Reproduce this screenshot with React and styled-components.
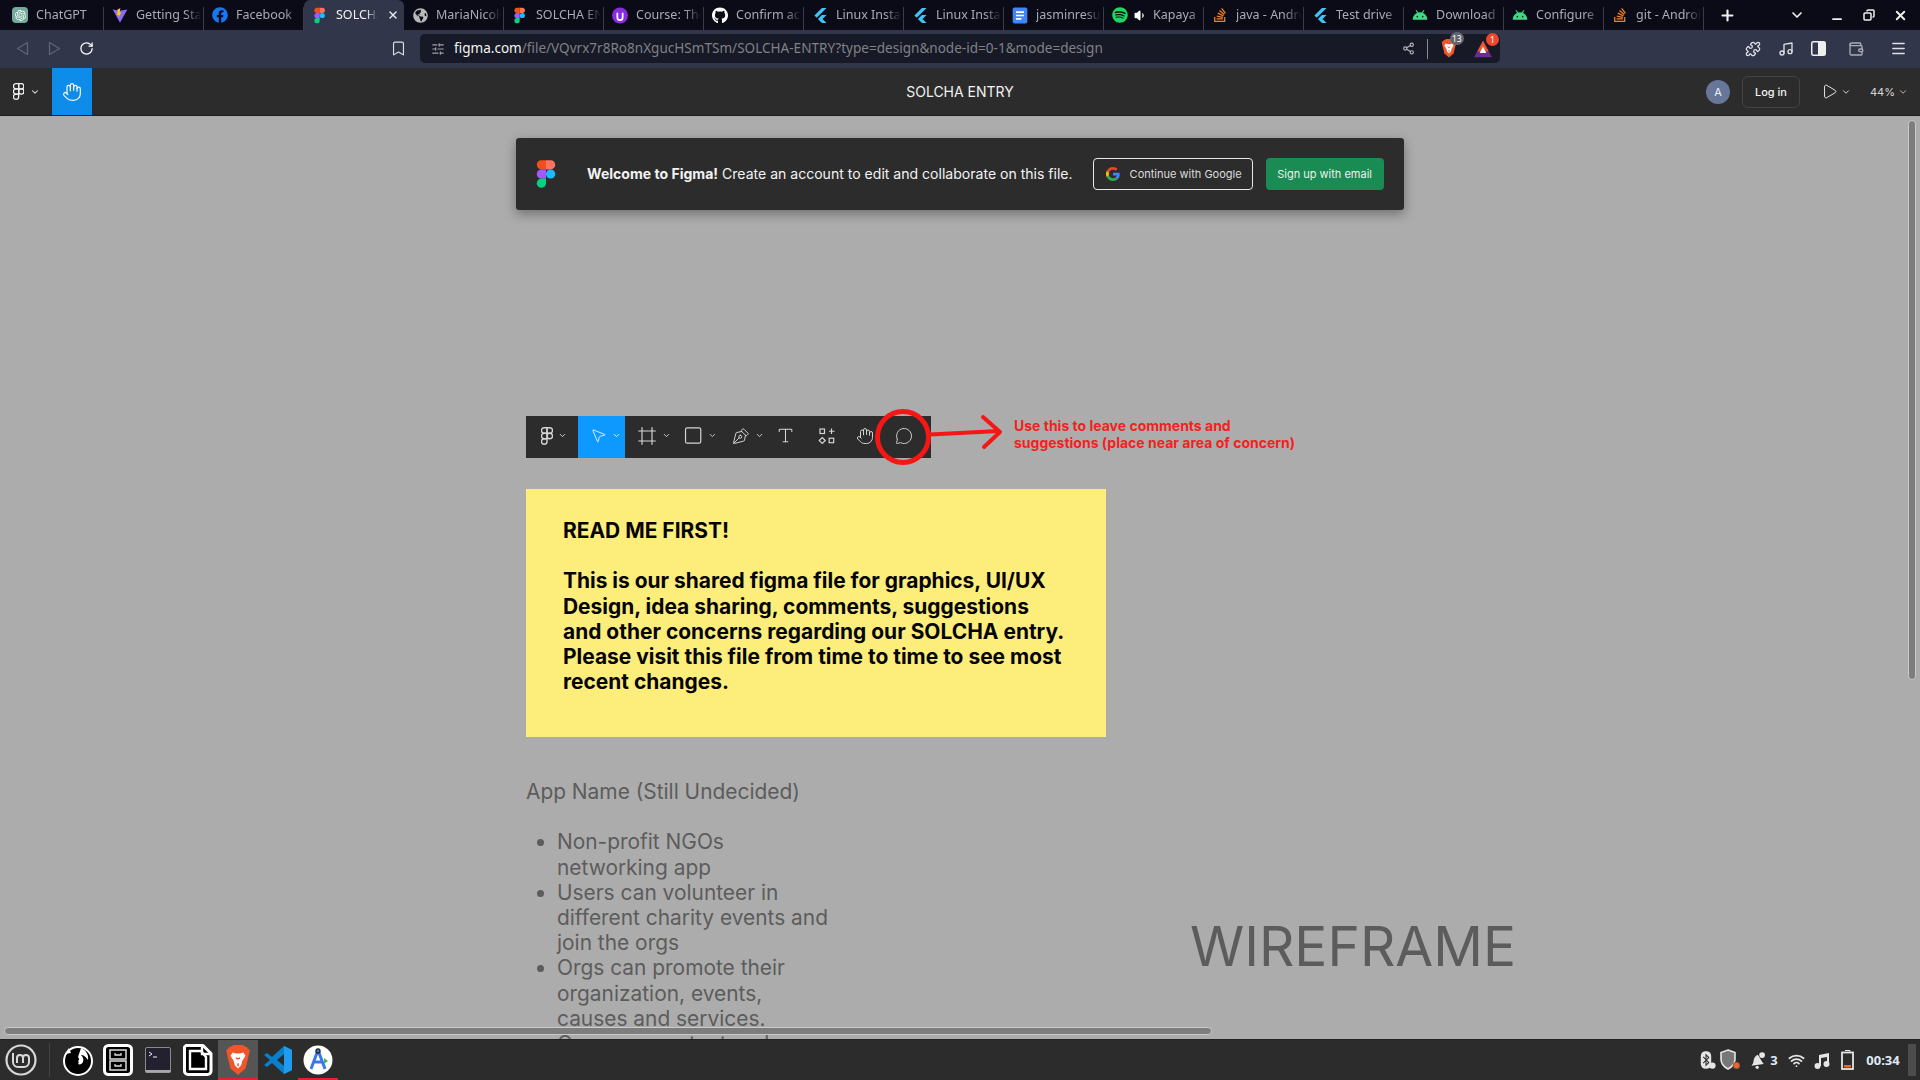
import React from 'react';
import styled, { createGlobalStyle } from 'styled-components';
import {
  ChevronDown, Hand, Plus, X, Minus, Share2, Music, Puzzle, Menu, Wallet, RotateCw, Bookmark, Play,
  SlidersHorizontal, MessageCircle, Square, Type, Frame, PenTool, MousePointer2, Copy, Wifi, Volume1,
} from 'lucide-react';
import { FaGithub, FaFacebook, FaSpotify, FaStackOverflow, FaGlobeAmericas } from 'react-icons/fa';
import { SiOpenai, SiFlutter } from 'react-icons/si';

const GlobalStyle = createGlobalStyle`
  html, body { margin: 0; padding: 0; width: 1920px; height: 1080px; overflow: hidden; background: #acacac; }
  #root { width: 1920px; height: 1080px; }
  * { box-sizing: border-box; }
`;

/* ---------- drawn icons ---------- */

function FigmaLogo({ size = 20, mono }) {
  const parts = [
    ['M0 6a6 6 0 0 1 6-6h6v12H6a6 6 0 0 1-6-6z', '#f24e1e'],
    ['M12 0h6a6 6 0 0 1 0 12h-6z', '#ff7262'],
    ['M0 18a6 6 0 0 1 6-6h6v12H6a6 6 0 0 1-6-6z', '#a259ff'],
    ['M12 18a6 6 0 1 1 12 0a6 6 0 0 1-12 0z', '#1abcfe'],
    ['M0 30a6 6 0 0 1 6-6h6v6a6 6 0 0 1-12 0z', '#0acf83'],
  ];
  return (
    <svg width={size * 0.667} height={size} viewBox="-1 -1 26 38">
      {parts.map(([d, c]) => (
        <path key={c} d={d} fill={mono ? 'none' : c} stroke={mono ? mono : 'none'} strokeWidth={mono ? 3 : 0} />
      ))}
    </svg>
  );
}

const GoogleLogo = () => (
  <svg width="14" height="14" viewBox="0 0 48 48">
    <path fill="#ea4335" d="M24 9.500c3.500 0 6.700 1.300 9.100 3.500l6.800-6.800C35.800 2.400 30.200 0 24 0 14.600 0 6.500 5.400 2.600 13.200l7.900 6.100C12.400 13.600 17.700 9.500 24 9.500z" />
    <path fill="#4285f4" d="M47 24.500c0-1.600-.1-3.200-.4-4.700H24v9h13c-.6 3-2.200 5.500-4.800 7.200l7.700 6c4.500-4.200 7.100-10.300 7.100-17.500z" />
    <path fill="#fbbc05" d="M10.500 28.700A14.500 14.500 0 0 1 9.700 24c0-1.600.3-3.200.8-4.700l-7.900-6.100A24 24 0 0 0 0 24c0 3.900.9 7.500 2.600 10.800l7.900-6.100z" />
    <path fill="#34a853" d="M24 48c6.500 0 11.900-2.100 15.900-5.800l-7.700-6c-2.100 1.400-4.900 2.300-8.200 2.300-6.300 0-11.600-4.100-13.500-9.800l-7.900 6.100C6.500 42.600 14.600 48 24 48z" />
  </svg>
);

const ViteLogo = () => (
  <svg width="17" height="17" viewBox="0 0 24 24">
    <path d="M1 3l11 20L23 3 12 5z" fill="#8b6cf5" />
    <path d="M12.500 1l-4 1.500-1 9 2.500-.5-.5 4 4.500-8-2.500.5z" fill="#ffc820" />
  </svg>
);

const CourseLogo = () => (
  <svg width="17" height="17" viewBox="0 0 24 24">
    <circle cx="12" cy="12" r="12" fill="#8a2be2" />
    <path d="M8 8v7a4 4 0 0 0 8 0V8" fill="none" stroke="#fff" strokeWidth="2.600" />
  </svg>
);

const DocsLogo = () => (
  <svg width="16" height="17" viewBox="0 0 24 24">
    <rect x="1" width="22" height="24" rx="3" fill="#4285f4" />
    <path d="M6 7h12M6 12h12M6 17h8" stroke="#fff" strokeWidth="2.400" />
  </svg>
);

const AndroidHead = () => (
  <svg width="17" height="14" viewBox="0 0 24 16">
    <path d="M1 15a11 11 0 0 1 22 0z" fill="#3ddc84" />
    <path d="M6 1l3 4M18 1l-3 4" stroke="#3ddc84" strokeWidth="1.600" />
    <circle cx="8" cy="10.500" r="1.200" fill="#0b0b17" />
    <circle cx="16" cy="10.500" r="1.200" fill="#0b0b17" />
  </svg>
);

const NavTriangle = ({ flip }) => (
  <svg width="13" height="15" viewBox="0 0 13 15" fill="none" stroke="#5f6376" strokeWidth="1.300" strokeLinejoin="round">
    <path d={flip ? 'M1.500 1.500L11.500 7.500L1.500 13.500z' : 'M11.500 1.500L1.500 7.500L11.500 13.500z'} />
  </svg>
);

const SidebarIcon = () => (
  <svg width="15" height="15" viewBox="0 0 15 15">
    <rect x="0.750" y="0.750" width="13.500" height="13.500" rx="1.500" fill="none" stroke="#eee" strokeWidth="1.500" />
    <rect x="7" y="1" width="7" height="13" fill="#eee" />
  </svg>
);

const BraveShield = ({ size = 18 }) => (
  <svg width={size} height={size * 1.15} viewBox="0 0 24 28">
    <path d="M4 2l4-2h8l4 2 3 3-1 5-3 12-7 6-7-6L2 10 1 5z" fill="#f1562b" />
    <path d="M7 7l3 1h4l3-1 2 3-3 5-1 4-3 3-3-3-1-4-3-5z" fill="#fff" />
    <path d="M10 12l2 1 2-1M12 17v3" stroke="#f1562b" strokeWidth="1.400" fill="none" />
  </svg>
);

const RewardsTriangle = () => (
  <svg width="20" height="18" viewBox="0 0 24 22">
    <path d="M12 1l11 20H1z" fill="#6a2c91" />
    <path d="M12 1l7 13H5z" fill="#f1562b" />
    <path d="M12 8l4 8H8z" fill="#fff" />
  </svg>
);

const MintLogo = () => (
  <svg width="32" height="32" viewBox="0 0 32 32" fill="none" stroke="#d8d8d8">
    <circle cx="16" cy="16" r="14.500" strokeWidth="2.200" />
    <path d="M8 9v9a5 5 0 0 0 5 5h6a5 5 0 0 0 5-5v-4a3 3 0 0 0-6 0v5M18 14a3 3 0 0 0-6 0v5" strokeWidth="2" />
  </svg>
);

const FirefoxMono = () => (
  <svg width="32" height="32" viewBox="0 0 32 32">
    <circle cx="16" cy="17" r="14" fill="#000" stroke="#fff" strokeWidth="2" />
    <path d="M19 4c5 2 8 7 7 12-2-3-4-5-7-5 2 2 3 4 2 7-1 2-3 3-5 2 1-1 1-2 0-3 2-1 1-3 0-4 1-3 2-6 3-9z" fill="#fff" />
    <path d="M3 10l4-6 2 5z" fill="#fff" />
  </svg>
);

const CabinetIcon = () => (
  <svg width="30" height="32" viewBox="0 0 30 32">
    <rect x="1.500" y="1.500" width="27" height="29" rx="4" fill="#000" stroke="#fff" strokeWidth="3" />
    <rect x="7" y="6" width="16" height="9" fill="none" stroke="#ddd" strokeWidth="1.500" />
    <rect x="7" y="17" width="16" height="9" fill="none" stroke="#ddd" strokeWidth="1.500" />
    <path d="M12 9v2h6V9M12 20v2h6v-2" fill="none" stroke="#ddd" strokeWidth="1.300" />
  </svg>
);

const TerminalIcon = () => (
  <svg width="26" height="26" viewBox="0 0 26 26">
    <rect x="0.500" y="0.500" width="25" height="25" rx="1.500" fill="#23212f" stroke="#8a8a8a" />
    <rect x="0.500" y="23" width="25" height="2.500" fill="#a8a8a8" />
    <path d="M4 5l3 2-3 2" fill="none" stroke="#eee" strokeWidth="1" />
    <path d="M8 10h4" stroke="#eee" strokeWidth="1" />
  </svg>
);

const OfficeIcon = () => (
  <svg width="30" height="32" viewBox="0 0 30 32">
    <path d="M3 1.500h17l8 8V27a3.500 3.500 0 0 1-3.500 3.500H5A3.500 3.500 0 0 1 1.500 27V3z" fill="#000" stroke="#fff" strokeWidth="3" strokeLinejoin="round" />
    <path d="M7 7h11l5 6v12H7z" fill="none" stroke="#fff" strokeWidth="2.400" />
    <path d="M19 2v8h9" fill="none" stroke="#fff" strokeWidth="2.400" />
  </svg>
);

const VSCodeIcon = () => (
  <svg width="30" height="30" viewBox="0 0 30 30">
    <path d="M21 1l8 4v20l-8 4L9 18l-5 4-3-2 6-5-6-5 3-2 5 4z" fill="#0a7fcc" />
    <path d="M21 1l8 4v20l-8 4z" fill="#1f9cf0" />
    <path d="M21 9l-7 6 7 6z" fill="#2c2c2c" />
  </svg>
);

const StudioIcon = () => (
  <svg width="30" height="30" viewBox="0 0 30 30">
    <circle cx="15" cy="15" r="14.500" fill="#fff" />
    <path d="M15 5L8 24M15 5l7 19M10 17h10" stroke="#3b78e7" strokeWidth="3" fill="none" />
    <circle cx="15" cy="6" r="2" fill="none" stroke="#222" strokeWidth="1.300" />
    <path d="M21 13l4 3-4 3z" fill="#4caf50" />
  </svg>
);

const BluetoothBlob = () => (
  <svg width="16" height="20" viewBox="0 0 20 24">
    <rect x="1" y="1" width="13" height="22" rx="6" fill="#e6e6e6" />
    <path d="M4 8l7 7-3.500 3.500V5.500L11 9l-7 7" fill="none" stroke="#2c2c2c" strokeWidth="1.300" />
    <circle cx="15.500" cy="19" r="4" fill="#e6e6e6" />
  </svg>
);

const ShieldDot = () => (
  <svg width="22" height="22" viewBox="0 0 22 22">
    <path d="M8 1l7 2.500V10c0 5-3 8-7 10-4-2-7-5-7-10V3.500z" fill="#777" stroke="#e6e6e6" strokeWidth="1.600" />
    <circle cx="16.500" cy="16.500" r="3.500" fill="#e8672c" stroke="#2c2c2c" strokeWidth="0.500" />
  </svg>
);

const BellDot = () => (
  <svg width="18" height="18" viewBox="0 0 22 22">
    <path d="M11 5l5 8 2 3-15 2 2-3 1-5c1-3 3-5 5-5z" fill="#e6e6e6" />
    <circle cx="10" cy="20" r="2" fill="#e6e6e6" />
    <circle cx="16" cy="5" r="3.500" fill="#e6e6e6" />
  </svg>
);

const MusicSolid = () => (
  <svg width="16" height="17" viewBox="0 0 16 17">
    <path d="M5 3l10-2v11h-2V5l-6 1v8H5z" fill="#e6e6e6" />
    <circle cx="3.500" cy="14" r="3" fill="#e6e6e6" />
    <circle cx="12.500" cy="12" r="3" fill="#e6e6e6" />
  </svg>
);

const BatteryLow = () => (
  <svg width="13" height="20" viewBox="0 0 13 20">
    <path d="M4 0.500h5v2" fill="none" stroke="#e6e6e6" />
    <rect x="1" y="2.500" width="11" height="16.500" fill="none" stroke="#e6e6e6" strokeWidth="1.800" />
    <rect x="3" y="15" width="7" height="2.500" fill="#e8672c" />
  </svg>
);

const ComponentsIcon = () => (
  <svg width="18" height="18" viewBox="0 0 18 18" fill="none" stroke="#d4d4d4" strokeWidth="1.200">
    <rect x="2" y="2" width="4.500" height="4.500" />
    <path d="M13.500 1.500v5.500M11 4.250h5.500" />
    <path d="M4.250 10.500l3 3-3 3-3-3z" />
    <rect x="11.200" y="11.200" width="4.500" height="4.500" />
  </svg>
);

const SoundIcon = styled(Volume1)`
  flex: none;
  margin: 0 -2px;
`;

const RestoreIcon = styled(Copy)`
  transform: scaleX(-1);
`;

const MinimizeIcon = styled(Minus)`
  margin-top: 8px;
`;

const PenIcon = styled(PenTool)`
  transform: rotate(-90deg);
`;

/* ---------- browser tab strip ---------- */

const tabs = [
  { title: 'ChatGPT', icon: <SiOpenai size={11} color="#fff" />, chip: '#74aa9c' },
  { title: 'Getting Started', icon: <ViteLogo /> },
  { title: 'Facebook', icon: <FaFacebook size={16} color="#1877f2" /> },
  { title: 'SOLCHA', icon: <FigmaLogo size={17} />, active: true },
  { title: 'MariaNicole', icon: <FaGlobeAmericas size={15} color="#b9b9b9" /> },
  { title: 'SOLCHA ENTRY', icon: <FigmaLogo size={17} /> },
  { title: 'Course: The', icon: <CourseLogo /> },
  { title: 'Confirm access', icon: <FaGithub size={17} color="#fff" /> },
  { title: 'Linux Install', icon: <SiFlutter size={15} color="#3fc4f5" /> },
  { title: 'Linux Install', icon: <SiFlutter size={15} color="#3fc4f5" /> },
  { title: 'jasminresume', icon: <DocsLogo /> },
  { title: 'Kapaya', icon: <FaSpotify size={16} color="#1ed760" />, sound: true },
  { title: 'java - Android', icon: <FaStackOverflow size={16} color="#f48024" /> },
  { title: 'Test drive', icon: <SiFlutter size={15} color="#3fc4f5" /> },
  { title: 'Download', icon: <AndroidHead /> },
  { title: 'Configure', icon: <AndroidHead /> },
  { title: 'git - Android', icon: <FaStackOverflow size={16} color="#f48024" /> },
];

const Page = styled.div`
  width: 1920px;
  height: 1080px;
  display: flex;
  flex-direction: column;
  overflow: hidden;
`;

const TabStrip = styled.div`
  height: 30px;
  flex: none;
  display: flex;
  align-items: stretch;
  padding-left: 4px;
  background: #0b0b17;
  font-family: 'Noto Sans', sans-serif;
`;

const Tab = styled.div`
  width: 100px;
  flex: none;
  display: flex;
  align-items: center;
  gap: 8px;
  padding-left: 8px;
  position: relative;
  border-radius: 6px 6px 0 0;
  background: ${(p) => (p.$active ? '#31364a' : 'transparent')};
  &::after {
    content: '';
    position: absolute;
    right: 0;
    top: 7px;
    bottom: 0;
    width: 1px;
    background: ${(p) => (p.$active ? 'transparent' : '#3a3c4c')};
  }
`;

const TabIcon = styled.span`
  width: 16px;
  height: 16px;
  flex: none;
  display: flex;
  align-items: center;
  justify-content: center;
  border-radius: 4px;
  background: ${(p) => p.$chip || 'transparent'};
`;

const TabTitle = styled.span`
  flex: 1;
  min-width: 0;
  overflow: hidden;
  white-space: nowrap;
  font-size: 12.500px;
  line-height: 30px;
  color: ${(p) => (p.$active ? '#f2f2f2' : '#a9abb4')};
  mask-image: linear-gradient(to right, #000 72%, transparent 96%);
`;

const TabClose = styled.span`
  flex: none;
  display: flex;
  margin-right: 5px;
  color: #e8e8e8;
`;

const StripButton = styled.span`
  flex: none;
  width: ${(p) => p.$w}px;
  margin-left: ${(p) => p.$gap || 0}px;
  display: flex;
  align-items: center;
  justify-content: center;
  color: #f0f0f0;
`;

/* ---------- address bar ---------- */

const AddressRow = styled.div`
  height: 38px;
  flex: none;
  display: flex;
  align-items: center;
  padding-bottom: 1px;
  background: #31364a;
  font-family: 'Noto Sans', sans-serif;
`;

const ToolButton = styled.span`
  width: ${(p) => p.$w}px;
  margin-left: ${(p) => p.$gap || 0}px;
  flex: none;
  display: flex;
  align-items: center;
  justify-content: center;
  color: #dfe0e4;
`;

const UrlBox = styled.div`
  width: 1080px;
  height: 29px;
  margin-left: 6px;
  flex: none;
  display: flex;
  align-items: center;
  padding: 0 0 0 11px;
  border-radius: 5px;
  background: #171a26;
`;

const UrlText = styled.div`
  margin-left: 9px;
  flex: 1;
  font-size: 13.550px;
  line-height: 27px;
  white-space: nowrap;
  color: #7f8187;
  b { font-weight: 400; color: #f2f2f2; }
`;

const UrlDivider = styled.span`
  width: 1px;
  height: 20px;
  margin: 0 4px 0 12px;
  background: #8a8c93;
`;

const ExtIcon = styled.span`
  position: relative;
  width: 34px;
  flex: none;
  display: flex;
  align-items: center;
  justify-content: center;
`;

const ExtBadge = styled.span`
  position: absolute;
  top: -7px;
  left: ${(p) => p.$left}px;
  min-width: 13px;
  height: 13px;
  padding: 0 2px;
  border-radius: 7px;
  font-size: 8.500px;
  line-height: 13px;
  text-align: center;
  color: #fff;
  background: ${(p) => p.$bg};
`;

/* ---------- figma header ---------- */

const FigmaBar = styled.div`
  height: 48px;
  flex: none;
  display: flex;
  align-items: stretch;
  background: #2c2c2c;
  border-bottom: 1px solid #1f1f1f;
  position: relative;
  font-family: Inter, sans-serif;
  color: #f2f2f2;
`;

const MenuButton = styled.div`
  width: 52px;
  display: flex;
  align-items: center;
  gap: 6px;
  padding-left: 13px;
`;

const HandButton = styled.div`
  width: 40px;
  display: flex;
  align-items: center;
  justify-content: center;
  background: #0d8ce9;
`;

const FileTitle = styled.div`
  position: absolute;
  left: 0;
  right: 0;
  top: 0;
  bottom: 0;
  display: flex;
  align-items: center;
  justify-content: center;
  font-size: 14px;
  pointer-events: none;
`;

const BarRight = styled.div`
  margin-left: auto;
  display: flex;
  align-items: center;
`;

const Avatar = styled.div`
  width: 24px;
  height: 24px;
  margin-right: 12px;
  border-radius: 50%;
  display: flex;
  align-items: center;
  justify-content: center;
  font-size: 11px;
  background: #667799;
`;

const LoginButton = styled.div`
  width: 58px;
  height: 32px;
  display: flex;
  align-items: center;
  justify-content: center;
  border: 1px solid #444;
  border-radius: 6px;
  font-size: 11px;
  font-weight: 500;
`;

const PlayGroup = styled.div`
  width: 40px;
  margin-left: 21px;
  display: flex;
  align-items: center;
  gap: 3px;
`;

const ZoomGroup = styled.div`
  width: 50px;
  margin-left: 9px;
  display: flex;
  align-items: center;
  gap: 3px;
  font-size: 11px;
  color: #d8d8d8;
`;

/* ---------- canvas ---------- */

const Canvas = styled.div`
  flex: 1;
  position: relative;
  overflow: hidden;
  background: #acacac;
  font-family: Inter, sans-serif;
`;

const Banner = styled.div`
  position: absolute;
  left: 516px;
  top: 22px;
  width: 888px;
  height: 72px;
  display: flex;
  align-items: center;
  padding-left: 20px;
  border-radius: 3px;
  background: #2c2c2c;
  box-shadow: 0 4px 12px rgba(0, 0, 0, 0.35);
  color: #f2f2f2;
`;

const BannerText = styled.div`
  margin: 0 0 2px 31px;
  font-size: 14.050px;
  white-space: nowrap;
  b { font-weight: 700; }
`;

const GoogleButton = styled.div`
  width: 160px;
  height: 32px;
  margin-left: 20px;
  display: flex;
  align-items: center;
  gap: 10px;
  padding-left: 12px;
  border: 1px solid #e8e8e8;
  border-radius: 4px;
  font-size: 11px;
  color: #dcdcdc;
`;

const SignupButton = styled.div`
  width: 118px;
  height: 32px;
  margin-left: 13px;
  display: flex;
  align-items: center;
  justify-content: center;
  border-radius: 4px;
  font-size: 11px;
  color: #e8f3ec;
  background: #1a8b53;
`;

const ToolStrip = styled.div`
  position: absolute;
  left: 526px;
  top: 300px;
  width: 405px;
  height: 42px;
  display: flex;
  background: #2c2c2c;
`;

const ToolSlot = styled.div`
  width: ${(p) => p.$w}px;
  flex: none;
  display: flex;
  align-items: center;
  justify-content: center;
  gap: 5px;
  padding: 0 ${(p) => p.$padRight || 0}px 3px ${(p) => p.$pad || 0}px;
  color: #d4d4d4;
  background: ${(p) => (p.$active ? '#0d99ff' : 'transparent')};
`;

const RedRing = styled.div`
  position: absolute;
  left: 875px;
  top: 293px;
  width: 56px;
  height: 56px;
  border: 5px solid #f51616;
  border-radius: 50%;
`;

const RedArrow = styled.svg`
  position: absolute;
  left: 928px;
  top: 298px;
`;

const RedNote = styled.div`
  position: absolute;
  left: 1014px;
  top: 302px;
  font-size: 14px;
  line-height: 16.500px;
  font-weight: 700;
  white-space: nowrap;
  color: #f51f1f;
`;

const Sticky = styled.div`
  position: absolute;
  left: 526px;
  top: 373px;
  width: 580px;
  height: 248px;
  padding: 29px 30px 0 37px;
  background: #fdee7c;
  font-size: 20.950px;
  line-height: 25.200px;
  font-weight: 700;
  color: #050505;
  p { margin: 0 0 25.200px; white-space: nowrap; }
`;

const Notes = styled.div`
  position: absolute;
  left: 526px;
  top: 663px;
  width: 340px;
  font-size: 20.900px;
  line-height: 25.200px;
  color: #5c5c5c;
  p { margin: 0 0 25.200px; }
  ul { margin: 0; padding: 0 0 0 31px; width: 310px; }
`;

const Wireframe = styled.div`
  position: absolute;
  left: 1190px;
  top: 796px;
  font-size: 55px;
  line-height: 68px;
  color: #5c5c5c;
`;

const HScroll = styled.div`
  position: absolute;
  left: 4px;
  top: 911px;
  width: 1208px;
  height: 8px;
  border: 1px solid #c9c9c9;
  border-radius: 4px;
  background: #7d7d7d;
`;

const VScroll = styled.div`
  position: absolute;
  left: 1908px;
  top: 4px;
  width: 8px;
  height: 560px;
  border: 1px solid #c9c9c9;
  border-radius: 4px;
  background: #7d7d7d;
`;

/* ---------- taskbar ---------- */

const Taskbar = styled.div`
  height: 41px;
  flex: none;
  display: flex;
  align-items: stretch;
  background: #2c2c2c;
  border-top: 1px solid #222;
  font-family: 'Noto Sans', sans-serif;
`;

const StartCell = styled.div`
  width: 50px;
  flex: none;
  display: flex;
  align-items: center;
  justify-content: center;
  padding-right: 8px;
  margin-right: 8px;
  position: relative;
  &::after {
    content: '';
    position: absolute;
    right: 0;
    top: 3px;
    bottom: 3px;
    width: 1px;
    background: #444;
  }
`;

const AppCell = styled.div`
  width: 40px;
  flex: none;
  display: flex;
  align-items: center;
  justify-content: center;
  background: ${(p) => (p.$focused ? '#555' : 'transparent')};
  border-bottom: 2px solid ${(p) => (p.$running ? '#e0222c' : 'transparent')};
  border-top: 2px solid transparent;
`;

const Tray = styled.div`
  margin-left: auto;
  display: flex;
  align-items: center;
`;

const TrayItem = styled.span`
  width: ${(p) => p.$w}px;
  flex: none;
  display: flex;
  align-items: center;
  justify-content: center;
  color: #e6e6e6;
`;

const TrayText = styled.span`
  font-size: 13px;
  font-weight: 700;
  color: #dfe9f5;
  white-space: nowrap;
`;

const ShowDesktop = styled.div`
  width: 8px;
  height: 32px;
  margin: 0 4px 0 7px;
  background: #4c4c4c;
`;

export default function App() {
  return (
    <Page>
      <GlobalStyle />
      <TabStrip>
        {tabs.map((t, i) => (
          <Tab key={i} $active={t.active}>
            <TabIcon $chip={t.chip}>{t.icon}</TabIcon>
            {t.sound && <SoundIcon size={13} color="#fff" fill="#fff" />}
            <TabTitle $active={t.active}>{t.title}</TabTitle>
            {t.active && <TabClose><X size={12} strokeWidth={3} /></TabClose>}
          </Tab>
        ))}
        <StripButton $w={46}><Plus size={17} strokeWidth={3} /></StripButton>
        <StripButton $w={40} $gap={27}><ChevronDown size={16} strokeWidth={2.5} /></StripButton>
        <StripButton $w={40}><MinimizeIcon size={14} strokeWidth={3} /></StripButton>
        <StripButton $w={23}><RestoreIcon size={12} strokeWidth={3} /></StripButton>
        <StripButton $w={40}><X size={15} strokeWidth={3} /></StripButton>
      </TabStrip>

      <AddressRow>
        <ToolButton $w={44}><NavTriangle /></ToolButton>
        <ToolButton $w={20}><NavTriangle flip /></ToolButton>
        <ToolButton $w={44}><RotateCw size={15} strokeWidth={2} color="#fff" /></ToolButton>
        <ToolButton $w={32} $gap={274}><Bookmark size={17} strokeWidth={1.6} /></ToolButton>
        <UrlBox>
          <SlidersHorizontal size={14} color="#a0a2a8" />
          <UrlText><b>figma.com</b>/file/VQvrx7r8Ro8nXgucHSmTSm/SOLCHA-ENTRY?type=design&amp;node-id=0-1&amp;mode=design</UrlText>
          <Share2 size={13} color="#b6b8bd" />
          <UrlDivider />
          <ExtIcon>
            <BraveShield size={16} />
            <ExtBadge $left={18} $bg="#62646e">13</ExtBadge>
          </ExtIcon>
          <ExtIcon>
            <RewardsTriangle />
            <ExtBadge $left={20} $bg="#f1462b">1</ExtBadge>
          </ExtIcon>
        </UrlBox>
        <ToolButton $w={34} $gap={236}><Puzzle size={16} /></ToolButton>
        <ToolButton $w={32}><Music size={16} /></ToolButton>
        <ToolButton $w={32}><SidebarIcon /></ToolButton>
        <ToolButton $w={44}><Wallet size={16} color="#aaacb4" /></ToolButton>
        <ToolButton $w={40}><Menu size={17} /></ToolButton>
      </AddressRow>

      <FigmaBar>
        <MenuButton>
          <FigmaLogo size={17} mono="#f0f0f0" />
          <ChevronDown size={10} strokeWidth={2.5} />
        </MenuButton>
        <HandButton><Hand size={20} strokeWidth={1.5} /></HandButton>
        <FileTitle>SOLCHA ENTRY</FileTitle>
        <BarRight>
          <Avatar>A</Avatar>
          <LoginButton>Log in</LoginButton>
          <PlayGroup>
            <Play size={17} strokeWidth={1.3} />
            <ChevronDown size={10} strokeWidth={2} />
          </PlayGroup>
          <ZoomGroup>
            <span>44%</span>
            <ChevronDown size={10} strokeWidth={2} />
          </ZoomGroup>
        </BarRight>
      </FigmaBar>

      <Canvas>
        <Banner>
          <FigmaLogo size={30} />
          <BannerText><b>Welcome to Figma!</b> Create an account to edit and collaborate on this file.</BannerText>
          <GoogleButton><GoogleLogo />Continue with Google</GoogleButton>
          <SignupButton>Sign up with email</SignupButton>
        </Banner>

        <ToolStrip>
          <ToolSlot $w={52} $pad={3}><FigmaLogo size={18} mono="#d4d4d4" /><ChevronDown size={9} strokeWidth={2.5} /></ToolSlot>
          <ToolSlot $w={47} $active $pad={8}><MousePointer2 size={17} strokeWidth={1.3} color="#e8f4ff" /><ChevronDown size={9} strokeWidth={2.5} color="#e8f4ff" /></ToolSlot>
          <ToolSlot $w={46} $pad={12}><Frame size={20} strokeWidth={1.4} /><ChevronDown size={9} strokeWidth={2.5} /></ToolSlot>
          <ToolSlot $w={46} $pad={12}><Square size={21} strokeWidth={1.4} /><ChevronDown size={9} strokeWidth={2.5} /></ToolSlot>
          <ToolSlot $w={47} $pad={14}><PenIcon size={18} strokeWidth={1.3} /><ChevronDown size={9} strokeWidth={2.5} /></ToolSlot>
          <ToolSlot $w={43}><Type size={19} strokeWidth={1.3} /></ToolSlot>
          <ToolSlot $w={39}><ComponentsIcon /></ToolSlot>
          <ToolSlot $w={38}><Hand size={18} strokeWidth={1.3} /></ToolSlot>
          <ToolSlot $w={47} $padRight={7}><MessageCircle size={18} strokeWidth={1.3} /></ToolSlot>
        </ToolStrip>
        <RedRing />
        <RedArrow width="76" height="36" viewBox="0 0 76 36" fill="none" stroke="#f51616" strokeWidth="4">
          <path d="M2 20.500L71 17" />
          <path d="M55 3l17 15-16 15" strokeLinecap="round" strokeLinejoin="round" />
        </RedArrow>
        <RedNote>Use this to leave comments and<br />suggestions (place near area of concern)</RedNote>

        <Sticky>
          <p>READ ME FIRST!</p>
          This is our shared figma file for graphics, UI/UX<br />
          Design, idea sharing, comments, suggestions<br />
          and other concerns regarding our SOLCHA entry.<br />
          Please visit this file from time to time to see most<br />
          recent changes.
        </Sticky>

        <Notes>
          <p>App Name (Still Undecided)</p>
          <ul>
            <li>Non-profit NGOs<br />networking app</li>
            <li>Users can volunteer in<br />different charity events and<br />join the orgs</li>
            <li>Orgs can promote their<br />organization, events,<br />causes and services.</li>
            <li>Orgs can contact and</li>
          </ul>
        </Notes>

        <Wireframe>WIREFRAME</Wireframe>
        <HScroll />
        <VScroll />
      </Canvas>

      <Taskbar>
        <StartCell><MintLogo /></StartCell>
        <AppCell><FirefoxMono /></AppCell>
        <AppCell><CabinetIcon /></AppCell>
        <AppCell><TerminalIcon /></AppCell>
        <AppCell><OfficeIcon /></AppCell>
        <AppCell $focused $running><BraveShield size={26} /></AppCell>
        <AppCell><VSCodeIcon /></AppCell>
        <AppCell $running><StudioIcon /></AppCell>
        <Tray>
          <TrayItem $w={16}><BluetoothBlob /></TrayItem>
          <TrayItem $w={30}><ShieldDot /></TrayItem>
          <TrayItem $w={24}><BellDot /></TrayItem>
          <TrayItem $w={8}><TrayText>3</TrayText></TrayItem>
          <TrayItem $w={36}><Wifi size={17} strokeWidth={2.5} /></TrayItem>
          <TrayItem $w={16}><MusicSolid /></TrayItem>
          <TrayItem $w={35}><BatteryLow /></TrayItem>
          <TrayItem $w={36}><TrayText>00:34</TrayText></TrayItem>
          <ShowDesktop />
        </Tray>
      </Taskbar>
    </Page>
  );
}
